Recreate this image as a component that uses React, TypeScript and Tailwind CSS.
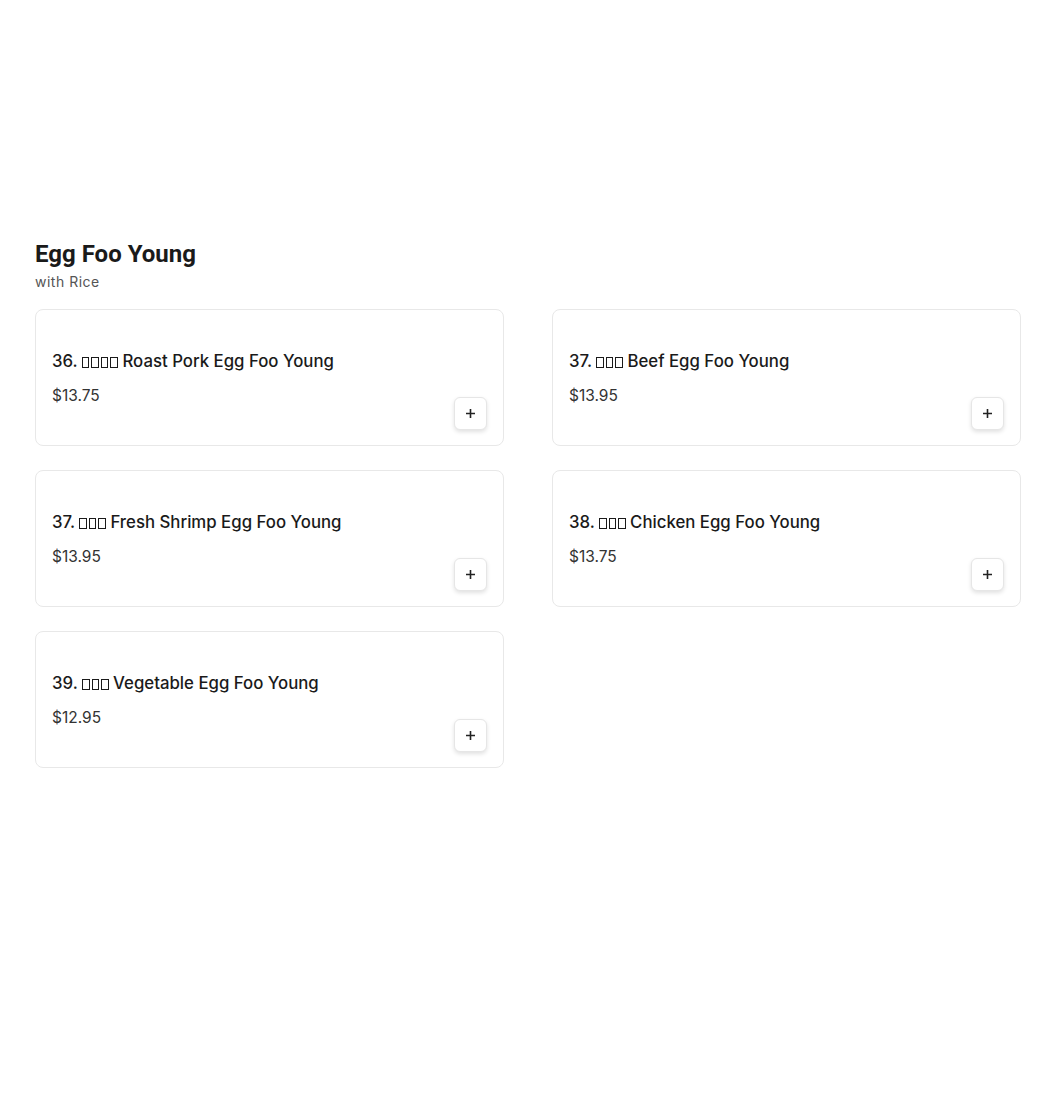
import React from "react";

const items = [
  { num: "36.", boxes: 4, name: "Roast Pork Egg Foo Young", price: "$13.75" },
  { num: "37.", boxes: 3, name: "Beef Egg Foo Young", price: "$13.95" },
  { num: "37.", boxes: 3, name: "Fresh Shrimp Egg Foo Young", price: "$13.95" },
  { num: "38.", boxes: 3, name: "Chicken Egg Foo Young", price: "$13.75" },
  { num: "39.", boxes: 3, name: "Vegetable Egg Foo Young", price: "$12.95" },
];

const body = { fontFamily: "Inter, 'Noto Sans', sans-serif" };

function Tofu({ n }: { n: number }) {
  return (
    <span className="inline-flex gap-[2px] align-[-1px]" aria-hidden>
      {Array.from({ length: n }).map((_, i) => (
        <span key={i} className="inline-block w-[7.5px] h-[11px] border-[1.5px] border-[#1a1a1a]" />
      ))}
    </span>
  );
}

function Card({ item }: { item: (typeof items)[number] }) {
  return (
    <div className="border border-[#e8e8e8] rounded-lg bg-white pt-[39px] px-4 pb-[15px] flex flex-col">
      <div className="text-[16.8px] leading-6 font-medium text-[#1a1a1a] whitespace-nowrap" style={body}>
        {item.num} <Tofu n={item.boxes} /> {item.name}
      </div>
      <div className="mt-[13px] flex justify-between items-start h-[44px]">
        <div className="text-[15.5px] leading-5 text-[#333]" style={body}>{item.price}</div>
        <button className="mt-[11px] w-[33px] h-[33px] rounded-md border border-[#e6e6e6] bg-white shadow-[0_2px_4px_rgba(0,0,0,0.12)] flex items-center justify-center">
          <svg width="11" height="11" viewBox="0 0 11 11">
            <path d="M5.5 1v9M1 5.5h9" stroke="#222" strokeWidth="1.6" />
          </svg>
        </button>
      </div>
    </div>
  );
}

export default function App() {
  return (
    <div className="min-h-[1093px] bg-white px-[35px] pt-[238px]">
      <h2 className="text-[24px] leading-8 font-bold text-[#1a1a1a]" style={{ fontFamily: "Roboto, sans-serif" }}>
        Egg Foo Young
      </h2>
      <p className="mt-[2px] text-[14px] leading-5 tracking-[0.5px] text-[#555]" style={body}>with Rice</p>
      <div className="mt-[17px] grid grid-cols-2 gap-x-[48px] gap-y-[24px] w-[986px]">
        {items.map((it, i) => (
          <Card key={i} item={it} />
        ))}
      </div>
    </div>
  );
}
